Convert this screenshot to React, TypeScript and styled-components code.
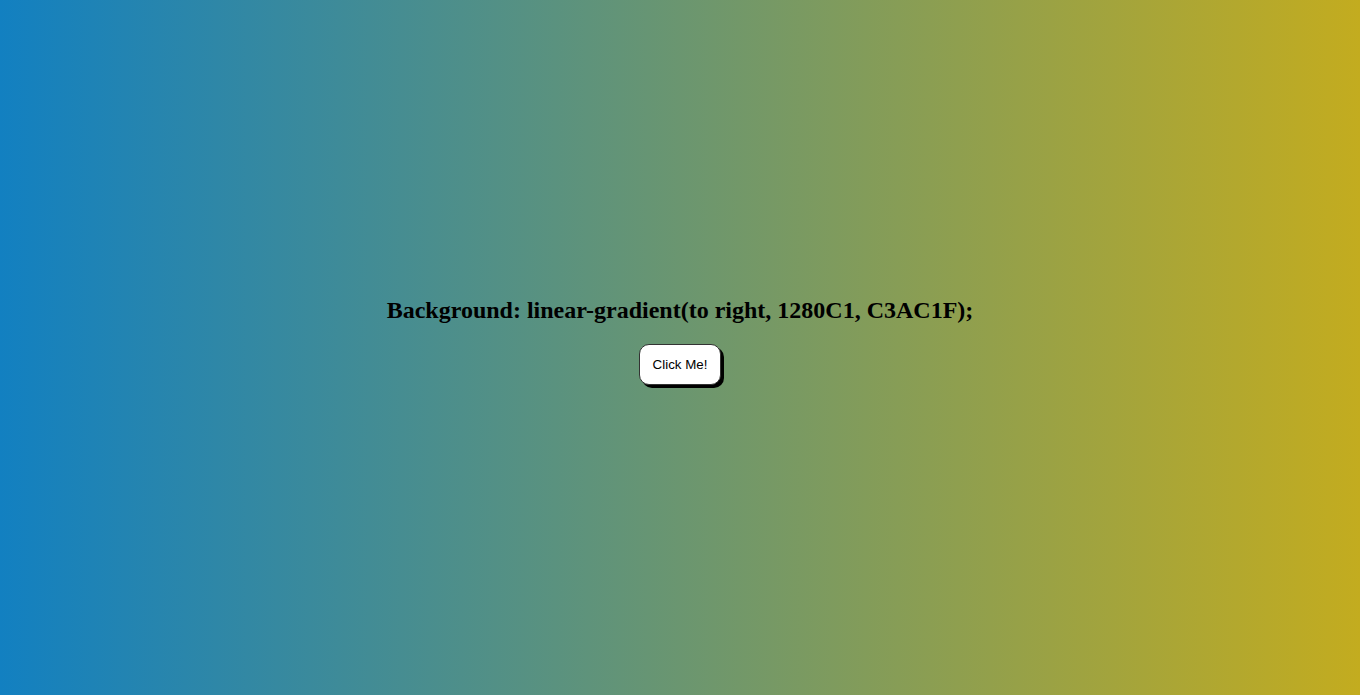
import styled, { createGlobalStyle } from "styled-components";

const GlobalStyle = createGlobalStyle`
  html, body {
    margin: 0;
    padding: 0;
  }
  body {
    background: linear-gradient(to right, #1280C1, #C3AC1F);
    min-height: 100vh;
  }
`;

const Page = styled.div`
  min-height: 100vh;
  display: flex;
  flex-direction: column;
  align-items: center;
  justify-content: center;
  padding-bottom: 13px;
  box-sizing: border-box;
`;

const Title = styled.h2`
  margin: 0;
  font-family: "Liberation Serif", "Times New Roman", serif;
  font-size: 24px;
  font-weight: bold;
  color: #000;
`;

const Button = styled.button`
  margin-top: 20px;
  padding: 12px 12.5px;
  font-family: "Liberation Sans", Arial, sans-serif;
  font-size: 13.33px;
  color: #000;
  background: #fff;
  border: 1px solid #333;
  border-radius: 10px;
  box-shadow: 3px 3px 0 #000;
  cursor: pointer;
`;

function App() {
  return (
    <>
      <GlobalStyle />
      <Page>
        <Title>Background: linear-gradient(to right, 1280C1, C3AC1F);</Title>
        <Button>Click Me!</Button>
      </Page>
    </>
  );
}

export default App;
